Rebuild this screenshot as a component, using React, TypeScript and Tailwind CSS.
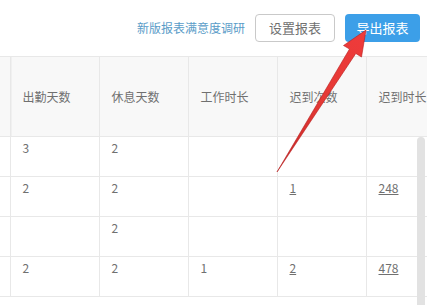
import React from 'react';

interface Row {
    id: number;
    cells: { value: string; link?: boolean }[];
}

const headers = ['出勤天数', '休息天数', '工作时长', '迟到次数', '迟到时长'];

const rows: Row[] = [
    { id: 1, cells: [{ value: '3' }, { value: '2' }, { value: '' }, { value: '' }, { value: '' }] },
    { id: 2, cells: [{ value: '2' }, { value: '2' }, { value: '' }, { value: '1', link: true }, { value: '248', link: true }] },
    { id: 3, cells: [{ value: '' }, { value: '2' }, { value: '' }, { value: '' }, { value: '' }] },
    { id: 4, cells: [{ value: '2' }, { value: '2' }, { value: '1' }, { value: '2', link: true }, { value: '478', link: true }] },
];

export default function App() {
    return (
        <div
            className="relative w-[427px] h-[305px] overflow-hidden bg-white text-[#707070]"
            style={{ fontFamily: '"Noto Sans CJK SC", "Noto Sans", sans-serif' }}
        >
            {/* ツールバー */}
            <div className="h-[56px] flex items-center justify-end pr-[7px]">
                <span className="text-[12px] text-[#5a9cc8] mr-[10px]">新版报表满意度调研</span>
                <button className="w-[80px] h-[28px] border border-[#c9c9c9] rounded-[4px] text-[13px] text-[#707070] bg-white mr-[10px]">
                    设置报表
                </button>
                <button className="w-[75px] h-[28px] rounded-[4px] text-[13px] text-white bg-[#3c9fe8]">
                    导出报表
                </button>
            </div>

            {/* テーブル */}
            <div className="w-full overflow-hidden">
                <table className="border-collapse table-fixed w-[560px] text-[12px]">
                    <colgroup>
                        <col className="w-[10px]" />
                        <col className="w-[89px]" />
                        <col className="w-[89px]" />
                        <col className="w-[89px]" />
                        <col className="w-[89px]" />
                        <col className="w-[194px]" />
                    </colgroup>
                    <thead>
                        <tr className="h-[80px] bg-[#f8f8f8]">
                            <th className="border border-[#e8e8e8] border-l-0 shadow-[2px_0_0_#f0f0f0]" />
                            {headers.map(h => (
                                <th key={h} className="border border-[#e8e8e8] px-[12px] text-left font-normal whitespace-nowrap">
                                    {h}
                                </th>
                            ))}
                        </tr>
                    </thead>
                    <tbody>
                        {rows.map(row => (
                            <tr key={row.id} className="h-[40px]">
                                <td className="border border-[#e8e8e8] border-l-0" />
                                {row.cells.map((c, i) => (
                                    <td key={i} className="border border-[#e8e8e8] px-[12px] pt-[4px] align-top leading-[14px]">
                                        {c.link ? <span className="underline">{c.value}</span> : c.value}
                                    </td>
                                ))}
                            </tr>
                        ))}
                    </tbody>
                </table>
            </div>

            {/* スクロールバー */}
            <div className="absolute right-[2px] top-[137px] bottom-0 w-[8px] rounded-t-[4px] bg-[#e2e2e2]" />

            {/* 赤い矢印 */}
            <svg className="absolute left-0 top-0 pointer-events-none" width="427" height="305" viewBox="0 0 427 305">
                <defs>
                    <linearGradient id="arrowGrad" x1="277" y1="172" x2="366" y2="30" gradientUnits="userSpaceOnUse">
                        <stop offset="0" stopColor="#c62828" />
                        <stop offset="0.5" stopColor="#e53935" />
                        <stop offset="1" stopColor="#ef3b3b" />
                    </linearGradient>
                </defs>
                <polygon
                    points="277,172 349.5,49 343.5,45.5 366,30 361.5,57 355.8,53.5"
                    fill="url(#arrowGrad)"
                    stroke="#b71c1c"
                    strokeWidth="0.6"
                    strokeLinejoin="round"
                />
            </svg>
        </div>
    );
}
